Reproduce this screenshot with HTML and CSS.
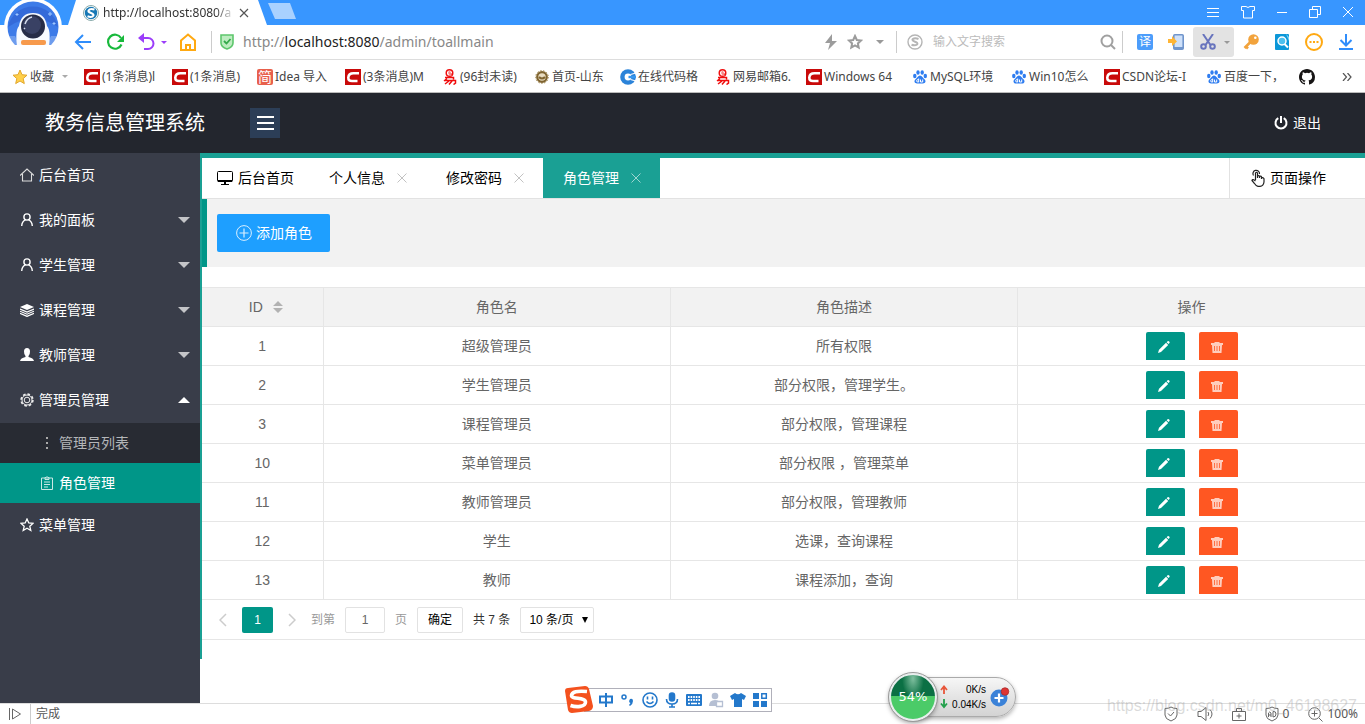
FILE: index.html
```html
<!DOCTYPE html>
<html lang="zh-CN">
<head>
<meta charset="utf-8">
<title>教务信息管理系统</title>
<link rel="stylesheet" href="styles.css">
</head>
<body>
<svg class="defs" aria-hidden="true">
  <symbol id="csdn" viewBox="0 0 16 16"><path fill="#c90a0a" d="M0 0h16v16H0z"/><path fill="none" stroke="#fff" stroke-width="2.6" d="M14 4.2H8.5C5 4.200 3.500 6 3.300 8.500C3.200 11 4.500 12 7 12h5.500"/></symbol>
  <symbol id="netease" viewBox="0 0 16 16"><circle cx="7.500" cy="4" r="4" fill="#f00d0d"/><path d="M5.500 4h4Q9.500 2 7.500 2T5.500 4t2 2h2" fill="none" stroke="#fff" stroke-width="1.100"/><path d="M3 8.500h8.500v2M5 9.500L2 12M3 11.500h10.500v2.500l-2 1.500M7 12l-4 3M10 12l-3 3.500" fill="none" stroke="#f00d0d" stroke-width="1.500"/></symbol>
  <symbol id="baidu" viewBox="0 0 16 16"><g fill="#2f7df0"><ellipse cx="2.800" cy="7" rx="1.700" ry="2.200"/><ellipse cx="6" cy="3.500" rx="1.700" ry="2.300"/><ellipse cx="10.200" cy="3.500" rx="1.700" ry="2.300"/><ellipse cx="13.300" cy="7" rx="1.700" ry="2.200"/><path d="M8 6.500c2 0 3 2.500 4.500 3.800 2 2 .8 4.200-1.500 4.200H5c-2.300 0-3.500-2.200-1.500-4.200C5 9 6 6.500 8 6.500z"/></g><path d="M6.700 9.500V13H5.300q-1.400-1.200 0-2.300h1.400M8.500 10.500V13h2.200v-2.500" fill="none" stroke="#fff"/></symbol>
  <symbol id="person" viewBox="0 0 14 14"><g fill="none" stroke="#fff" stroke-width="1.400"><circle cx="7" cy="4" r="3.100"/><path d="M5.500 6.800Q2 8 1.700 13M8.500 6.800Q12 8 12.300 13"/></g></symbol>
  <symbol id="pencil" viewBox="0 0 14 14"><path fill="#fff" d="M1 13l1-3.200 7-7 2.200 2.200L4 12zM9.600 2.200l1-1q.8-.5 1.600.3.800.8.300 1.600l-1 1z"/></symbol>
  <symbol id="trash" viewBox="0 0 14 14"><path fill="#fff" fill-opacity=".7" d="M1 3h3l1-1h4l1 1h3v2H1zM2 5h10l-.5 8h-9z"/><path d="M4.500 6v5M7 6v5M9.500 6v5" stroke="#ff5722" stroke-width=".8"/></symbol>
</svg>

<div class="browser">
  <div class="titlebar">
    <div class="browser-tab">
      <svg class="i16" viewBox="0 0 16 16"><circle cx="8" cy="8" r="7.500" fill="#fff" stroke="#8aa"/><circle cx="8" cy="8" r="6.200" fill="#1778b5"/><path d="M11.500 4.500Q7 3 5.500 5.500 5 7 8 8t2.500 2.500Q9 13 4.500 11.300" fill="none" stroke="#fff" stroke-width="2"/></svg>
      <span class="browser-tab-title">http://localhost:8080/a</span>
      <button class="plain" aria-label="关闭标签"><svg width="10" height="10" viewBox="0 0 10 10"><path d="M1 1l8 8M9 1L1 9" stroke="#555" stroke-width="1.200"/></svg></button>
    </div>
    <button class="plain new-tab" aria-label="新标签"></button>
    <div class="window-controls">
      <svg width="14" height="14" viewBox="0 0 14 14"><path d="M1 2.500h12M1 6.500h12M1 10.500h12"/></svg>
      <svg width="14" height="14" viewBox="0 0 14 14"><path d="M5 .5q2 2 4 0h4.500v4h-2v7.500h-9V4.500h-2v-4z"/></svg>
      <svg width="12" height="14" viewBox="0 0 12 14"><path d="M1 6.500h10"/></svg>
      <svg width="12" height="14" viewBox="0 0 12 14"><path d="M.5 3.500h8v8h-8zM3.500 3V.5h8v8H9"/></svg>
      <svg width="12" height="14" viewBox="0 0 12 14"><path d="M1 1l10 10M11 1L1 11"/></svg>
    </div>
  </div>
  <svg class="avatar" viewBox="0 0 64 50"><circle cx="33" cy="27" r="29" fill="#fff"/><clipPath id="cut"><path d="M0 0h64v45H0z"/></clipPath><g clip-path="url(#cut)"><circle cx="33" cy="27" r="25.500" fill="#3d7be8"/><path d="M8 27a25.500 25.500 0 0 1 50 0Q33 10 8 27" fill="#2f5fce" opacity=".6"/><path d="M17 46q-2-16 2-20 2-13 14-13t14 13q4 4 2 20z" fill="#f7faff"/><path d="M5 36l10 0 5 10H5zM61 36H51l-5 10h15z" fill="#fff" opacity=".25"/></g><circle cx="33" cy="26.500" r="12" fill="#272d48"/><circle cx="32" cy="25" r="9" fill="#394164"/><path d="M25 24q2-6 7-7M24 28l1 1" stroke="#d5dced" stroke-width="1.500" fill="none"/><rect x="21" y="40" width="25" height="5" rx="2" fill="#f79a4c"/><path d="M50 12v4M48 14h4M54 22v3M52.500 23.500h3M17 13v3M15.500 14.500h3" stroke="#9fc8ff"/></svg>

  <div class="toolbar">
    <div class="nav-buttons">
      <button class="plain" aria-label="后退"><svg width="18" height="18" viewBox="0 0 18 18" fill="none" stroke="#2f8dfb" stroke-width="2"><path d="M17 9H2M9 2L2 9l7 7"/></svg></button>
      <button class="plain" aria-label="刷新"><svg width="18" height="18" viewBox="0 0 18 18"><path d="M15.500 11.500A7 7 0 1 1 15 5" fill="none" stroke="#18b93c" stroke-width="2.200"/><path d="M18 2v7h-7z" fill="#18b93c"/></svg></button>
      <button class="plain undo" aria-label="恢复"><svg width="17" height="18" viewBox="0 0 17 18"><path d="M3 5h7a5 5 0 0 1 0 11H6" fill="none" stroke="#9b3dfa" stroke-width="2"/><path d="M0 5l6-5v10z" fill="#9b3dfa"/></svg><i class="caret purple"></i></button>
      <button class="plain" aria-label="主页"><svg width="18" height="18" viewBox="0 0 18 18"><path d="M2 7.500L9 1.500l7 6V17H2zM7 17v-5h4v5" fill="none" stroke="#ffa912" stroke-width="2"/></svg></button>
    </div>
    <div class="address">
      <svg width="14" height="16" viewBox="0 0 14 16"><path d="M1 1h12v8q0 4-6 6-6-2-6-6z" fill="#bdecc0" stroke="#5dc66c" stroke-width="1.600"/><path d="M4 7l2.500 2.500L10.500 5" fill="none" stroke="#34a94a" stroke-width="1.800"/></svg>
      <span class="url">http://<b>localhost:8080</b>/admin/toallmain</span>
      <div class="address-tools">
        <svg width="14" height="16" viewBox="0 0 14 16"><path fill="#9c9c9c" d="M8 0L1 9h5l-2 7 9-9H8z"/></svg>
        <svg width="16" height="16" viewBox="0 0 16 16"><path fill="none" stroke="#9c9c9c" stroke-width="2" d="M8 2l1.800 4 4.200.5-3.100 2.900.8 4.200L8 11.500l-3.700 2.100.8-4.200L2 6.500 6.200 6z"/></svg>
        <i class="caret"></i>
      </div>
    </div>
    <div class="search">
      <svg class="i16" viewBox="0 0 16 16" fill="none" stroke="#b5b5b5"><circle cx="8" cy="8" r="7" stroke-width="1.400"/><path d="M11.500 5Q8 3.500 5.800 5 4.500 6.500 8 7.700t2 2.800Q8 12 4.500 10.800" stroke-width="2"/></svg>
      <input type="text" class="search-input" aria-label="搜索" placeholder="输入文字搜索">
      <svg class="i16" viewBox="0 0 16 16" fill="none" stroke="#a0a0a0" stroke-width="2"><circle cx="7" cy="7" r="5.500"/><path d="M11 11l4 4"/></svg>
    </div>
    <div class="extensions">
      <span class="translate">译</span>
      <svg class="i16" viewBox="0 0 16 16"><rect x="5.800" y=".8" width="9.400" height="14.400" rx="1" fill="#cfe1fa" stroke="#7095cc" stroke-width="1.600"/><path d="M6 13h9v2H6z" fill="#7095cc"/><path d="M0 5h4V2l5 5.500L4 12v-3H0z" fill="#ffb535"/></svg>
      <span class="scissors"><svg class="i16" viewBox="0 0 16 16" fill="none" stroke="#6874bd" stroke-width="2"><path d="M3 0l7.500 11M13 0L5.500 11"/><circle cx="3.500" cy="12.500" r="2.300"/><circle cx="12.500" cy="12.500" r="2.300"/></svg><i class="caret"></i></span>
      <svg class="i16" viewBox="0 0 16 16"><circle cx="10.500" cy="5.500" r="5.300" fill="#f2a33c"/><circle cx="12.300" cy="3.800" r="1.300" fill="#fff"/><path d="M7.500 8L1.500 14M3 12.500l2 2" stroke="#f2a33c" stroke-width="2.600"/></svg>
      <svg class="i16" viewBox="0 0 16 16"><rect x="1" y="0" width="14" height="16" rx="1" fill="#0b97d8"/><path d="M12 0l3 3v4z" fill="#7fd4f7"/><circle cx="8" cy="7" r="4" fill="#4cc0ee" stroke="#fff" stroke-width="1.500"/><path d="M10.500 10l3.500 3.500" stroke="#fff" stroke-width="2"/></svg>
      <svg width="18" height="18" viewBox="0 0 18 18"><circle cx="9" cy="9" r="8" fill="none" stroke="#ffa912" stroke-width="2"/><path d="M4.500 8h2v2h-2zM8 8h2v2H8zM11.500 8h2v2h-2z" fill="#ffa912"/></svg>
      <svg class="i16" viewBox="0 0 16 16" fill="none" stroke="#2f8dfb" stroke-width="2"><path d="M8 0v11M2.500 6L8 11.500 13.500 6M1 15h14"/></svg>
    </div>
  </div>

  <nav class="bookmarks" aria-label="收藏">
    <a href="#"><svg class="i16" viewBox="0 0 16 16"><path fill="#ffd04a" stroke="#e2a72c" d="M8 1l2 4.700 5 .5-3.800 3.400 1.100 5L8 12l-4.300 2.600 1.100-5L1 6.200l5-.5z"/></svg>收藏<i class="caret light"></i></a>
    <a href="#"><svg class="i16"><use href="#csdn"/></svg>(1条消息)l</a>
    <a href="#"><svg class="i16"><use href="#csdn"/></svg>(1条消息)</a>
    <a href="#"><span class="jian">简</span>Idea 导入</a>
    <a href="#"><svg class="i16"><use href="#csdn"/></svg>(3条消息)M</a>
    <a href="#"><svg class="i16"><use href="#netease"/></svg>(96封未读)</a>
    <a href="#"><svg class="i16" viewBox="0 0 16 16"><circle cx="8" cy="8" r="4.800" fill="#e8dcc0" stroke="#7f6430" stroke-width="2.200"/><circle cx="8" cy="8" r="6.300" fill="none" stroke="#9b8044" stroke-dasharray="1.500 1.500"/><path d="M5 8q3 3 6 0" stroke="#7f6430" stroke-width="2" fill="none"/></svg>首页-山东</a>
    <a href="#"><svg class="i16" viewBox="0 0 16 16"><circle cx="8" cy="8" r="7.800" fill="#2b83d9"/><path d="M16 4l-5.500 1.500M16 12l-5.500-1.500" stroke="#fff" stroke-width="1.200"/><circle cx="8" cy="8" r="3.400" fill="#fff"/><path d="M8.500 6.800H16v2.400H8.500z" fill="#3597f0"/></svg>在线代码格</a>
    <a href="#"><svg class="i16"><use href="#netease"/></svg>网易邮箱6.</a>
    <a href="#"><svg class="i16"><use href="#csdn"/></svg>Windows 64</a>
    <a href="#"><svg class="i16"><use href="#baidu"/></svg>MySQL环境</a>
    <a href="#"><svg class="i16"><use href="#baidu"/></svg>Win10怎么</a>
    <a href="#"><svg class="i16"><use href="#csdn"/></svg>CSDN论坛-I</a>
    <a href="#"><svg class="i16"><use href="#baidu"/></svg>百度一下，</a>
    <a href="#" aria-label="GitHub"><svg class="i16" viewBox="0 0 16 16"><path fill="#171515" d="M8 0C3.580 0 0 3.580 0 8c0 3.540 2.290 6.530 5.470 7.590.4.070.55-.17.55-.38 0-.19-.01-.82-.01-1.490-2.010.37-2.530-.49-2.690-.94-.09-.23-.48-.94-.82-1.130-.28-.15-.68-.52-.01-.53.630-.01 1.080.58 1.230.82.720 1.210 1.870.87 2.330.66.070-.52.280-.87.510-1.070-1.780-.2-3.640-.89-3.640-3.950 0-.87.310-1.590.82-2.150-.08-.2-.36-1.020.08-2.120 0 0 .67-.21 2.200.82a7.600 7.600 0 0 1 4 0c1.530-1.040 2.200-.82 2.200-.82.440 1.100.160 1.920.080 2.120.510.56.820 1.270.820 2.150 0 3.070-1.870 3.750-3.650 3.950.290.250.540.730.540 1.480 0 1.070-.01 1.930-.01 2.200 0 .210.150.460.550.380A8 8 0 0 0 16 8c0-4.420-3.580-8-8-8z"/></svg></a>
    <button class="plain" aria-label="更多收藏"><svg width="10" height="8" viewBox="0 0 10 8"><path d="M1 0l3.500 4L1 8M5.500 0L9 4 5.500 8" fill="none" stroke="#555" stroke-width="1.200"/></svg></button>
  </nav>
</div>

<header class="app-header">
  <h1>教务信息管理系统</h1>
  <button class="menu-toggle" aria-label="切换菜单"><svg width="18" height="16" viewBox="0 0 18 16"><path d="M1 2h17M1 8h17M1 14h17" stroke="#fff" stroke-width="2"/></svg></button>
  <a href="#" class="logout"><svg width="14" height="14" viewBox="0 0 14 14"><path d="M4.300 2.200a5.500 5.500 0 1 0 5.400 0M7 0v7" fill="none" stroke="#fff" stroke-width="2"/></svg>退出</a>
</header>

<div class="app">
  <nav class="sidebar">
    <a href="#" class="item"><svg class="i14" viewBox="0 0 14 14"><path d="M0 7.500L7 1l7 6.500M2.500 6v7h9V6" fill="none" stroke="#ddd" stroke-width="1.100"/></svg>后台首页</a>
    <a href="#" class="item"><svg class="i14"><use href="#person"/></svg>我的面板<i class="arrow"></i></a>
    <a href="#" class="item"><svg class="i14"><use href="#person"/></svg>学生管理<i class="arrow"></i></a>
    <a href="#" class="item"><svg class="i14" viewBox="0 0 14 14"><path d="M7 1l7 3-7 3-7-3z" fill="#fff"/><path d="M0 6l7 3 7-3M0 8.200l7 3 7-3M0 10.400l7 3 7-3" fill="none" stroke="#fff" stroke-width="1.200"/></svg>课程管理<i class="arrow"></i></a>
    <a href="#" class="item"><svg class="i14" viewBox="0 0 14 14"><path d="M7 0q3 0 3 3.500T8.500 8v1q5 1 5.500 4H0q.5-3 5.500-4V8Q4 7 4 3.500T7 0z" fill="#fff"/></svg>教师管理<i class="arrow"></i></a>
    <a href="#" class="item"><svg class="i14" viewBox="0 0 14 14" fill="none" stroke="#eee"><circle cx="7" cy="7" r="5.900" stroke-width="1.600" stroke-dasharray="2.600 2"/><circle cx="7" cy="7" r="5"/><circle cx="7" cy="7" r="2.800"/></svg>管理员管理<i class="arrow up"></i></a>
    <div class="submenu">
      <a href="#"><svg class="i14" viewBox="0 0 14 14"><path d="M6 1h2v2H6zM6 6h2v2H6zM6 11h2v2H6z" fill="#aaa"/></svg>管理员列表</a>
      <a href="#" class="current"><svg class="i14" viewBox="0 0 14 14"><path d="M1.500 2h11v11.500h-11zM5 3.500v-2h1.200L7 .5l.8 1H9v2zM4 6h6M4 8.500h6M4 11h4" fill="none" stroke="#c9e9e5"/></svg>角色管理</a>
    </div>
    <a href="#" class="item"><svg class="i14" viewBox="0 0 14 14"><path d="M7 1l1.800 4 4.200.4-3.200 2.900 1 4.200L7 10.300l-3.800 2.200 1-4.200L1 5.400 5.200 5z" fill="none" stroke="#fff" stroke-width="1.300"/></svg>菜单管理</a>
  </nav>

  <main class="content">
    <div class="tabs">
      <a href="#" class="tab home"><svg class="i16" viewBox="0 0 16 16"><rect x=".5" y="1.500" width="15" height="10" rx="1" fill="none" stroke="#000"/><path d="M1 10h14v2H1zM7 12h2v2h3v1H4v-1h3z"/></svg>后台首页</a>
      <a href="#" class="tab">个人信息<svg class="close" viewBox="0 0 10 10"><path d="M.5.5l9 9M9.500.5l-9 9"/></svg></a>
      <a href="#" class="tab">修改密码<svg class="close" viewBox="0 0 10 10"><path d="M.5.5l9 9M9.500.5l-9 9"/></svg></a>
      <a href="#" class="tab active">角色管理<svg class="close" viewBox="0 0 10 10"><path d="M.5.5l9 9M9.500.5l-9 9"/></svg></a>
      <a href="#" class="page-ops"><svg width="14" height="18" viewBox="0 0 14 18" fill="none" stroke="#222" stroke-width="1.200"><path d="M2.500 6.500A3.300 3.300 0 1 1 8.500 5"/><path d="M4.500 11V4q1-1.500 2 0v5V7q1.300-1 2 .3V9 7.500q1.300-.8 2 .4V10 8.700q2-.6 2.500 1V13q-.5 4-4 4.300H7Q5 17 3.500 14.500L1 11.500q.5-2 3.500.5"/></svg>页面操作</a>
    </div>

    <div class="actions">
      <button class="add"><svg class="i16" viewBox="0 0 16 16" fill="none" stroke="#d9efff"><circle cx="8" cy="8" r="7.400"/><path d="M8 3.500v9M3.500 8h9" stroke-width="1.200"/></svg>添加角色</button>
    </div>

    <table class="roles">
      <colgroup><col class="col-id"><col><col><col></colgroup>
      <thead>
        <tr><th class="sortable">ID<svg class="sort" viewBox="0 0 10 12"><path d="M0 5l5-5 5 5zM0 7l5 5 5-5z" fill="#b2b2b2"/></svg></th><th>角色名</th><th>角色描述</th><th>操作</th></tr>
      </thead>
      <tbody>
        <tr><td>1</td><td>超级管理员</td><td>所有权限</td><td><div class="ops"><button class="edit" aria-label="编辑"><svg class="i14"><use href="#pencil"/></svg></button><button class="delete" aria-label="删除"><svg class="i14"><use href="#trash"/></svg></button></div></td></tr>
        <tr><td>2</td><td>学生管理员</td><td>部分权限，管理学生。</td><td><div class="ops"><button class="edit" aria-label="编辑"><svg class="i14"><use href="#pencil"/></svg></button><button class="delete" aria-label="删除"><svg class="i14"><use href="#trash"/></svg></button></div></td></tr>
        <tr><td>3</td><td>课程管理员</td><td>部分权限，管理课程</td><td><div class="ops"><button class="edit" aria-label="编辑"><svg class="i14"><use href="#pencil"/></svg></button><button class="delete" aria-label="删除"><svg class="i14"><use href="#trash"/></svg></button></div></td></tr>
        <tr><td>10</td><td>菜单管理员</td><td>部分权限 ，管理菜单</td><td><div class="ops"><button class="edit" aria-label="编辑"><svg class="i14"><use href="#pencil"/></svg></button><button class="delete" aria-label="删除"><svg class="i14"><use href="#trash"/></svg></button></div></td></tr>
        <tr><td>11</td><td>教师管理员</td><td>部分权限，管理教师</td><td><div class="ops"><button class="edit" aria-label="编辑"><svg class="i14"><use href="#pencil"/></svg></button><button class="delete" aria-label="删除"><svg class="i14"><use href="#trash"/></svg></button></div></td></tr>
        <tr><td>12</td><td>学生</td><td>选课，查询课程</td><td><div class="ops"><button class="edit" aria-label="编辑"><svg class="i14"><use href="#pencil"/></svg></button><button class="delete" aria-label="删除"><svg class="i14"><use href="#trash"/></svg></button></div></td></tr>
        <tr><td>13</td><td>教师</td><td>课程添加，查询</td><td><div class="ops"><button class="edit" aria-label="编辑"><svg class="i14"><use href="#pencil"/></svg></button><button class="delete" aria-label="删除"><svg class="i14"><use href="#trash"/></svg></button></div></td></tr>
      </tbody>
    </table>

    <div class="pager">
      <button class="plain step" aria-label="上一页"><svg width="8" height="14" viewBox="0 0 8 14"><path d="M7 1L1 7l6 6" fill="none" stroke="#ccc" stroke-width="1.500"/></svg></button>
      <button class="page">1</button>
      <button class="plain step" aria-label="下一页"><svg width="8" height="14" viewBox="0 0 8 14"><path d="M1 1l6 6-6 6" fill="none" stroke="#ccc" stroke-width="1.500"/></svg></button>
      <label class="goto">到第<input type="text" value="1">页</label>
      <button class="confirm">确定</button>
      <span class="total">共 7 条</span>
      <span class="limit"><select aria-label="每页条数"><option>10 条/页</option></select></span>
    </div>
  </main>
</div>

<footer class="statusbar">
  <svg class="play" width="12" height="14" viewBox="0 0 12 14" fill="none" stroke="#666"><path d="M.5 1v12M3.500 2l8 5-8 5z"/></svg>
  <span class="state">完成</span>
  <div class="status-tools">
    <svg width="14" height="16" viewBox="0 0 14 16"><path d="M1 2.500Q5 2.500 7 1q2 1.500 6 1.500V9q0 4-6 6-6-2-6-6zM4 7.500L6.500 10 10 6"/></svg>
    <svg width="16" height="14" viewBox="0 0 16 14"><path d="M1 4.500h3l5-4v13l-5-4H1zM11 5q1.500 2 0 4M13 2.500q4 4.500 0 9"/></svg>
    <svg width="14" height="14" viewBox="0 0 14 14"><path d="M.5 4.500h13v9H.5zM4.500 4V1.500h5V4M7 6.500v5M4.500 9h5"/></svg>
    <span class="pair"><svg width="14" height="16" viewBox="0 0 14 16"><path d="M1 2.500Q5 2.500 7 1q2 1.500 6 1.500V9q0 4-6 6-6-2-6-6zM3.500 11V7q1-2 2.500 0v4M3.500 9H6M8 5.500V11q3 0 3-3T8 5.500"/></svg>0</span>
    <span class="pair"><svg width="15" height="15" viewBox="0 0 15 15"><circle cx="6.500" cy="6.500" r="5.800"/><path d="M11 11l3.500 3.500M6.500 3.500v6M3.500 6.500h6"/></svg>100%</span>
  </div>
</footer>
<span class="watermark">https://blog.csdn.net/m0_46198627</span>

<div class="ime">
  <svg class="ime-logo" viewBox="0 0 28 28"><path d="M0 5Q0 2 3 2L20 0q3 0 4 3l4 17q0 4-4 5L7 27q-3 0-4-3z" fill="#f4511e"/><path d="M22 5.500Q7 4 6.500 9.500c0 4 14 1.500 14 6.500s-9 5.500-15 3.500" fill="none" stroke="#fff" stroke-width="3.600"/></svg>
  <span class="ime-icons">
    <svg class="i16" viewBox="0 0 16 16" fill="none" stroke="#2378cb" stroke-width="2"><path d="M2 4.500h12v6H2zM8 1v14"/></svg>
    <svg class="i16" viewBox="0 0 16 16"><circle cx="4" cy="5" r="2" fill="none" stroke="#2378cb" stroke-width="1.500"/><path d="M10 7q3-1 3 2 0 3-3 5l-1-1 1.500-2Q8 10 10 7z" fill="#2378cb"/></svg>
    <svg class="i16" viewBox="0 0 16 16" fill="none" stroke="#2378cb" stroke-width="1.600"><circle cx="8" cy="8" r="7"/><path d="M5.500 4.500v3M10.500 4.500v3M4.500 9.500q3.500 4 7 0"/></svg>
    <svg class="i16" viewBox="0 0 16 16" fill="none" stroke="#2378cb" stroke-width="1.600"><rect x="5.500" y="1" width="5" height="8" rx="2.500" fill="#2378cb"/><path d="M2.500 7q0 5 5.500 5t5.500-5M8 12v3M5 15h6"/></svg>
    <svg class="i16" viewBox="0 0 16 16"><rect x="0" y="2" width="16" height="12" rx="1" fill="#2378cb"/><path d="M2 5h12M2 8h12" stroke="#fff" stroke-width="1.800" stroke-dasharray="1.600 1"/><path d="M2 11.500h2M5 11.500h6M12 11.500h2" stroke="#fff" stroke-width="1.500"/></svg>
    <svg class="i16" viewBox="0 0 16 16" fill="#b5bfd3"><circle cx="7" cy="4" r="3.300"/><path d="M1 14q0-6 6-6 4 0 5 3v3z"/><path d="M8.500 9.500h6v5h-6z" fill="#fff" stroke="#b5bfd3" stroke-width="1.300"/></svg>
    <svg class="i16" viewBox="0 0 16 16"><path fill="#2378cb" d="M5 1q3 2.500 6 0l5 3-2 4-2-1v8H4V7L2 8 0 4z"/></svg>
    <svg class="i16" viewBox="0 0 16 16"><path fill="#2378cb" d="M1 1h6v6H1zM1 9h6v6H1zM9 9h6v6H9z"/><path fill="none" stroke="#2378cb" stroke-width="1.500" d="M9.800 1.800h4.500v4.500H9.800z"/></svg>
  </span>
</div>

<div class="netball">
  <div class="speeds">
    <svg width="8" height="24" viewBox="0 0 8 24" fill="none" stroke-width="1.800"><path d="M4 9V2M1 5l3-3.500L7 5" stroke="#e8563a"/><path d="M4 14v7M1 18.500L4 22l3-3.500" stroke="#23a04c"/></svg>
    <span class="rates">0K/s<br>0.04K/s</span>
    <svg width="20" height="20" viewBox="0 0 20 20"><circle cx="9" cy="11" r="8.500" fill="#3b82d8"/><path d="M9 6.500v9M4.500 11h9" stroke="#fff" stroke-width="2.200"/><circle cx="15" cy="4.500" r="3.800" fill="#dd3434" stroke="#a62525" stroke-width=".7"/></svg>
  </div>
  <div class="ball">54%</div>
</div>
</body>
</html>
```
FILE: styles.css
```css
* { box-sizing: border-box; }
body {
  margin: 0;
  min-height: 100vh;
  display: flex;
  flex-direction: column;
  position: relative;
  background: #fff;
  color: #666;
  font: 14px/20px "Liberation Sans", "Noto Sans CJK SC", sans-serif;
}
a { color: inherit; text-decoration: none; }
button, input, select { font: inherit; }
svg { flex: none; display: block; }
.defs { position: absolute; width: 0; height: 0; }
.i16 { width: 16px; height: 16px; }
.i14 { width: 14px; height: 14px; }
.plain { display: flex; align-items: center; padding: 0; border: 0; background: none; }
.caret {
  border: 4px solid transparent;
  border-top-color: #999;
  border-bottom: 0;
}
.caret.purple { border-width: 3px; border-top-color: #9b3dfa; border-bottom: 0; }
.caret.light { border-width: 3px; border-top-color: #aaa; border-bottom: 0; margin-left: 6px; }

/* Browser window */
.browser {
  position: relative;
  font-family: "Noto Sans", "Noto Sans CJK SC", sans-serif;
  color: #444;
}
.titlebar { display: flex; height: 25px; padding-left: 68px; background: #3896ff; }
.browser-tab {
  display: flex;
  align-items: center;
  gap: 4px;
  width: 199px;
  padding: 0 18px 0 15px;
  background: #fff;
  clip-path: polygon(8px 0, 190px 0, 100% 100%, 0 100%);
  font-size: 12px;
  color: #333;
}
.browser-tab-title {
  width: 132px;
  white-space: nowrap;
  mask-image: linear-gradient(to right, #000 85%, transparent);
}
.new-tab {
  width: 28px;
  height: 16px;
  margin: 3px 0 0 1px;
  background: #a9d1ff;
  clip-path: polygon(0 0, 22px 0, 100% 100%, 7px 100%);
}
.window-controls {
  display: flex;
  align-items: center;
  gap: 21px;
  margin-left: auto;
  padding-right: 11px;
  fill: none;
  stroke: #fff;
}
.avatar { position: absolute; left: 0; top: 0; width: 64px; height: 50px; }
.toolbar {
  display: flex;
  align-items: center;
  height: 35px;
  padding: 0 11px 0 74px;
  border-bottom: 1px solid #ddd;
}
.nav-buttons { display: flex; gap: 14px; padding-right: 14px; }
.undo { gap: 6px; margin-right: -2px; }
.address {
  display: flex;
  flex: 1;
  align-items: center;
  gap: 9px;
  height: 22px;
  padding: 0 12px 0 8px;
  border-left: 1px solid #ccc;
}
.url { font-size: 14px; color: #888; }
.url b { font-weight: 400; color: #222; }
.address-tools { display: flex; align-items: center; gap: 9px; margin-left: auto; }
.address-tools .caret { margin-left: 4px; }
.search {
  display: flex;
  align-items: center;
  gap: 10px;
  width: 227px;
  height: 22px;
  padding: 0 6px 0 10px;
  border: solid #ccc;
  border-width: 0 1px;
}
.search-input { flex: 1; min-width: 0; padding: 0; border: 0; outline: 0; background: none; font-size: 12px; }
.search-input::placeholder { color: #bbb; }
.extensions { display: flex; align-items: center; gap: 15px; padding-left: 14px; }
.translate, .jian {
  width: 16px;
  height: 16px;
  border-radius: 2px;
  background: #4c9dfb;
  color: #fff;
  font-size: 12px;
  line-height: 16px;
  text-align: center;
}
.jian { background: #e8604c; font-size: 14px; }
.scissors {
  display: flex;
  align-items: center;
  gap: 8px;
  height: 30px;
  margin: 0 -6px;
  padding: 0 4px 0 7px;
  border-radius: 3px;
  background: #e3e3e3;
}
.scissors .caret { border-width: 3px; border-bottom: 0; }
.bookmarks {
  display: grid;
  grid-template-columns: 72px 88px 85px 88px 97px 92px 86px 95px 91px 106px 99px 93px 102px 93px 1fr auto;
  align-items: center;
  height: 33px;
  padding: 1px 13px 0 12px;
  border-bottom: 1px solid #bbb;
  font-size: 12px;
}
.bookmarks a { display: flex; align-items: center; gap: 2px; white-space: nowrap; }

/* Application header */
.app-header {
  display: flex;
  align-items: center;
  height: 60px;
  padding: 0 44px 0 45px;
  background: #23262e;
  color: #fff;
}
.app-header h1 { width: 205px; margin: 0; font-size: 20px; line-height: 30px; font-weight: 400; }
.menu-toggle {
  display: flex;
  align-items: center;
  justify-content: center;
  width: 30px;
  height: 30px;
  padding: 0;
  border: 0;
  background: #2c3e57;
}
.logout { display: flex; align-items: center; gap: 5px; margin-left: auto; }

/* Sidebar */
.app { display: flex; flex: 1; align-items: stretch; }
.sidebar { width: 200px; flex: none; background: #393d49; color: #fff; }
.item {
  display: flex;
  align-items: center;
  gap: 5px;
  height: 45px;
  padding: 0 10px 2px 20px;
}
.arrow {
  margin-left: auto;
  border: 6px solid transparent;
  border-top-color: #c4c5c8;
  border-bottom: 0;
}
.arrow.up { border: 6px solid transparent; border-top: 0; border-bottom-color: #fff; }
.submenu { background: #282b33; color: #b4b6b9; }
.submenu a { display: flex; align-items: center; gap: 5px; height: 40px; padding-left: 40px; }
.submenu .current { background: #009688; color: #fff; }

/* Content */
.content {
  flex: 1;
  min-width: 0;
  margin-bottom: 44px;
  border-top: 5px solid #1aa094;
  border-left: 2px solid #1aa094;
}
.tabs { display: flex; height: 41px; border-bottom: 1px solid #e2e2e2; color: #000; }
.tab { display: flex; align-items: center; gap: 12px; height: 40px; padding: 0 19px 0 20px; }
.tab.home { gap: 5px; padding: 0 15px; }
.tab.active { background: #1aa094; color: #fff; }
.close { width: 10px; height: 10px; stroke: #c2c2c2; }
.active .close { stroke: #9fd5d0; }
.page-ops {
  display: flex;
  align-items: center;
  gap: 5px;
  margin-left: auto;
  padding: 0 39px 0 21px;
  border-left: 1px solid #e2e2e2;
}
.actions {
  margin-bottom: 20px;
  padding: 15px 10px;
  border-left: 5px solid #009688;
  background: #f2f2f2;
}
.add {
  display: flex;
  align-items: center;
  gap: 4px;
  height: 38px;
  padding: 0 18px 0 19px;
  border: 0;
  border-radius: 2px;
  background: #1e9fff;
  color: #fff;
}
.roles {
  width: 100%;
  table-layout: fixed;
  border-collapse: collapse;
  border-top: 1px solid #e6e6e6;
}
.col-id { width: 121px; }
.roles th, .roles td {
  height: 39px;
  padding: 0;
  border: solid #e6e6e6;
  border-width: 0 1px 1px 0;
  font-weight: 400;
  text-align: center;
}
.roles th:last-child, .roles td:last-child { border-right: 0; }
.roles th { background: #f2f2f2; }
.roles .sortable { padding-left: 7px; }
.sort { display: inline-block; width: 10px; height: 12px; margin-left: 10px; vertical-align: -1px; }
.ops { display: flex; justify-content: center; gap: 14px; }
.ops button {
  display: flex;
  align-items: center;
  justify-content: center;
  width: 39px;
  height: 28px;
  padding: 2px 3px 0 0;
  border: 0;
  border-radius: 2px 2px 0 0;
}
.ops .edit { background: #009688; }
.ops .delete { background: #ff5722; }

/* Pagination */
.pager {
  display: flex;
  align-items: center;
  gap: 10px;
  height: 40px;
  padding-left: 17px;
  border-bottom: 1px solid #e6e6e6;
  color: #999;
  font-size: 12px;
}
.page {
  width: 31px;
  height: 26px;
  padding: 0;
  margin: 0 5px;
  border: 0;
  border-radius: 2px;
  background: #009688;
  color: #fff;
}
.pager .step + .goto { margin-left: 5px; }
.goto { display: flex; align-items: center; gap: 10px; }
.goto input {
  width: 40px;
  height: 26px;
  padding: 0;
  border: 1px solid #e2e2e2;
  border-radius: 2px;
  color: #666;
  text-align: center;
}
.confirm {
  width: 46px;
  height: 26px;
  padding: 0;
  border: 1px solid #e2e2e2;
  border-radius: 2px;
  background: #fff;
  color: #000;
}
.total { color: #333; }
.limit {
  display: flex;
  align-items: center;
  position: relative;
}
.limit::after {
  content: "";
  position: absolute;
  right: 6px;
  border: 3px solid transparent;
  border-top: 6px solid #000;
  border-bottom: 0;
  pointer-events: none;
}
.limit select {
  appearance: none;
  width: 74px;
  height: 26px;
  padding: 0 0 0 8px;
  border: 1px solid #e2e2e2;
  border-radius: 2px;
  background: #fff;
  color: #000;
}

/* Status bar */
.statusbar {
  display: flex;
  align-items: center;
  height: 21px;
  padding: 0 7px 0 9px;
  border-top: 1px solid #ddd;
  font: 12px/20px "Noto Sans", "Noto Sans CJK SC", sans-serif;
  color: #555;
}
.state { margin-left: 9px; padding-left: 5px; border-left: 1px solid #ccc; }
.status-tools { display: flex; align-items: center; gap: 19px; margin-left: auto; }
.status-tools svg { fill: none; stroke: #666; }
.pair { display: flex; align-items: center; gap: 4px; }
.watermark {
  position: absolute;
  right: 8px;
  bottom: 8px;
  color: rgba(150, 150, 150, .35);
  font-size: 16px;
}

/* Floating desktop widgets */
.ime {
  position: absolute;
  left: 565px;
  bottom: 10px;
  display: flex;
  align-items: center;
}
.ime-logo { width: 28px; height: 28px; z-index: 1; }
.ime-icons {
  display: flex;
  align-items: center;
  gap: 6px;
  height: 24px;
  margin-left: -9px;
  padding: 0 3px 0 13px;
  border: 1px solid #b0b0ba;
  background: #fff;
}
.netball { position: absolute; left: 889px; bottom: 2px; width: 127px; height: 50px; display: flex; align-items: center; }
.speeds {
  display: flex;
  align-items: center;
  justify-content: flex-end;
  gap: 4px;
  width: 103px;
  height: 40px;
  margin-left: 24px;
  padding-right: 5px;
  border: 1px solid #aaa;
  border-radius: 0 20px 20px 0;
  background: linear-gradient(#f6f6f6, #d3d3d3);
  box-shadow: 0 2px 4px rgba(0, 0, 0, .3);
}
.rates { width: 34px; color: #000; font: 10px/15px "Liberation Sans", sans-serif; text-align: right; white-space: nowrap; }
.ball {
  position: absolute;
  left: 0;
  width: 48px;
  height: 48px;
  border: 2px solid #e9eeee;
  border-radius: 50%;
  outline: 1px solid #999;
  background: radial-gradient(ellipse at 50% 8%, #7fbf9f, transparent 35%), linear-gradient(#0b7044 48%, #4bcb68 48%);
  box-shadow: 0 2px 5px rgba(0, 0, 0, .4);
  color: #fff;
  font: 13px/44px "DejaVu Sans", sans-serif;
  text-align: center;
}
```
